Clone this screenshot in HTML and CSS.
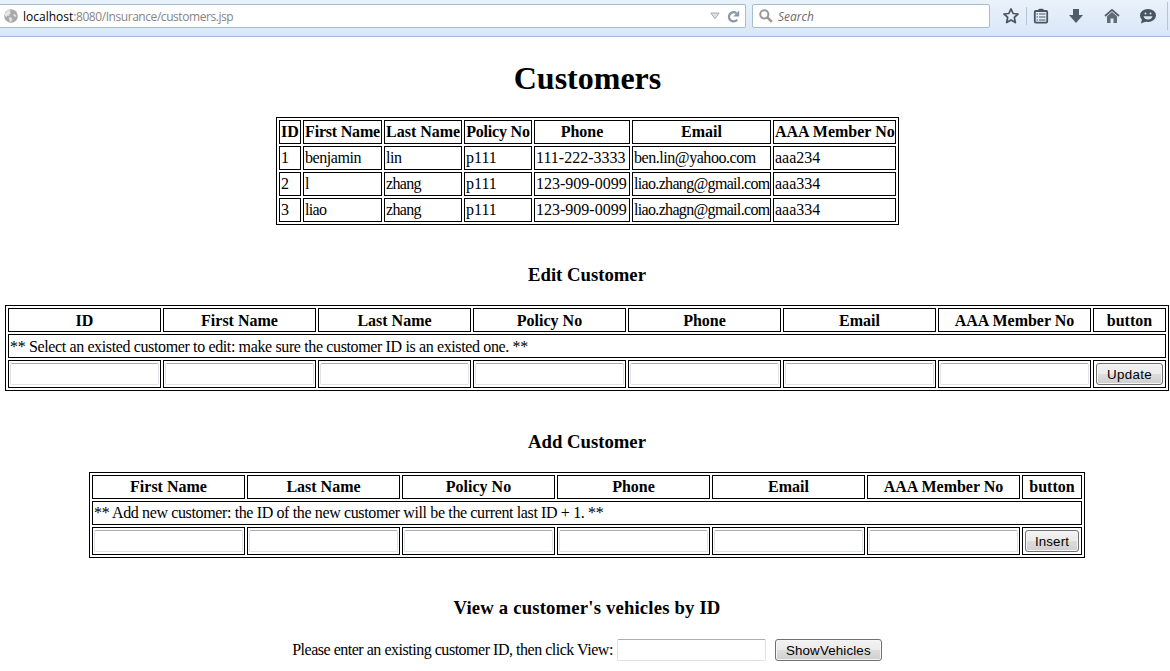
FILE: index.html
```html
<!DOCTYPE html>
<html lang="en">
<head>
<meta charset="utf-8">
<title>Customers</title>
<link rel="stylesheet" href="styles.css">
</head>
<body>
<header class="toolbar">
  <div class="field url">
    <svg class="globe" width="14" height="14" viewBox="0 0 14 14"><circle cx="7" cy="7" r="6.8" fill="#a9a9a9"/><path d="M1 4.5 3.5 1.6 6.5 1 6 3 7 4.2 5.2 5.2 5.4 7 3.6 6.6 2.6 8 1 7zM4.6 8 7.4 8.8 8.4 10.2 7 12.8 5.4 12.4 5.6 10.4zM9 6 10.5 5 12.5 7 11 8z" fill="#e6e6e6"/></svg>
    <span class="address"><b class="host">localhost</b>:8080/Insurance/customers.jsp</span>
    <svg class="drop" width="10" height="8" viewBox="0 0 10 8"><path d="M.8 1H9.2L5 6.8z" fill="#dde2e7" stroke="#a3adb7"/></svg>
    <svg class="reload" width="13" height="13" viewBox="0 0 13 13"><path d="M10.2 9.6A4.6 4.6 0 1 1 9.4 3.2" fill="none" stroke="#8b9aa8" stroke-width="2.3"/><path d="M12.2.4V6.4H6.2z" fill="#8b9aa8"/></svg>
  </div>
  <div class="field search">
    <svg width="14" height="14" viewBox="0 0 14 14"><circle cx="5.3" cy="5.3" r="4.1" fill="none" stroke="#979797" stroke-width="2"/><path d="M8.3 8.3 12.8 12.8" stroke="#979797" stroke-width="2.6"/></svg>
    <span class="hint">Search</span>
  </div>
  <nav class="icons">
    <svg class="star" width="18" height="18" viewBox="0 0 18 18"><path d="M9 1.9 11.1 6.5 16 7 12.3 10.4 13.4 15.6 9 13 4.6 15.6 5.7 10.4 2 7 6.9 6.5z" fill="none" stroke="#485462" stroke-width="1.7" stroke-linejoin="round"/></svg>
    <i class="rule"></i>
    <svg class="list" width="16" height="16" viewBox="0 0 16 16"><path d="M5 3V1.8L6.5.8H9.5L11 1.8V3z" fill="#485462"/><rect x="1.8" y="3" width="12.4" height="11.6" rx="1" fill="#e4eef8" stroke="#485462" stroke-width="1.8"/><path d="M3.5 6H5M6 6H12.5M3.5 9H5M6 9H12.5M3.5 12H5M6 12H12.5" stroke="#485462" stroke-width="1.2"/></svg>
    <svg class="down" width="16" height="16" viewBox="0 0 16 16"><path d="M5 1H11V7H15L8 15 1 7H5z" fill="#505c69"/></svg>
    <svg class="home" width="16" height="16" viewBox="0 0 16 16"><path d="M1 8 8 1.8 15 8" fill="none" stroke="#505c69" stroke-width="1.7"/><path d="M3 8.3 8 4 13 8.3V15H9.5V10.5H6.5V15H3z" fill="#606b77"/></svg>
    <svg class="chat" width="18" height="16" viewBox="0 0 18 16"><ellipse cx="9" cy="7.4" rx="8" ry="6.5" fill="#485462"/><path d="M3 11 2 15.5 8 13z" fill="#485462"/><path d="M4.5 8.3H13.5Q12.6 11.5 9 11.5T4.5 8.3z" fill="#dce7f2"/><circle cx="6.5" cy="5.4" r="1" fill="#dce7f2"/><circle cx="11.5" cy="5.4" r="1" fill="#dce7f2"/></svg>
    <i class="rule end"></i>
  </nav>
</header>
<main class="page">
  <h1>Customers</h1>
  <table class="grid customers">
    <colgroup><col class="c-id"><col class="c-first"><col class="c-last"><col class="c-policy"><col class="c-phone"><col class="c-email"><col class="c-aaa"></colgroup>
    <tr><th>ID</th><th class="snug">First Name</th><th>Last Name</th><th class="snug">Policy No</th><th>Phone</th><th>Email</th><th>AAA Member No</th></tr>
    <tr><td>1</td><td class="name">benjamin</td><td class="name">lin</td><td>p111</td><td>111-222-3333</td><td class="name">ben.lin@yahoo.com</td><td>aaa234</td></tr>
    <tr><td>2</td><td>l</td><td class="tight">zhang</td><td>p111</td><td>123-909-0099</td><td class="tight">liao.zhang@gmail.com</td><td>aaa334</td></tr>
    <tr><td>3</td><td class="tight">liao</td><td class="tight">zhang</td><td>p111</td><td>123-909-0099</td><td class="tight">liao.zhagn@gmail.com</td><td>aaa334</td></tr>
  </table>
  <h3 class="h-edit">Edit Customer</h3>
  <table class="grid edit">
    <colgroup><col span="7" class="c-input"><col class="c-update"></colgroup>
    <tr><th>ID</th><th>First Name</th><th>Last Name</th><th>Policy No</th><th>Phone</th><th>Email</th><th>AAA Member No</th><th>button</th></tr>
    <tr><td colspan="8" class="note">** Select an existed customer to edit: make sure the customer ID is an existed one. **</td></tr>
    <tr class="form"><td><input></td><td><input></td><td><input></td><td><input></td><td><input></td><td><input></td><td><input></td><td><button class="update">Update</button></td></tr>
  </table>
  <h3 class="h-add">Add Customer</h3>
  <table class="grid add">
    <colgroup><col span="6" class="c-input"><col class="c-insert"></colgroup>
    <tr><th>First Name</th><th>Last Name</th><th>Policy No</th><th>Phone</th><th>Email</th><th>AAA Member No</th><th>button</th></tr>
    <tr><td colspan="7" class="note">** Add new customer: the ID of the new customer will be the current last ID + 1. **</td></tr>
    <tr class="form"><td><input></td><td><input></td><td><input></td><td><input></td><td><input></td><td><input></td><td><button class="insert">Insert</button></td></tr>
  </table>
  <h3 class="h-view">View a customer's vehicles by ID</h3>
  <div class="view"><span class="prompt">Please enter an existing customer ID, then click View:</span><input><button class="show">ShowVehicles</button></div>
</main>
</body>
</html>
```
FILE: styles.css
```css
* { box-sizing: border-box; }
body { margin: 0; height: 671px; overflow: hidden; background: #fff; color: #000; font: 16px/20px "Liberation Serif", "Times New Roman", serif; }
.toolbar { display: flex; height: 37px; padding-top: 4px; background: linear-gradient(#e9f2fb, #d9e7f7); border-bottom: 1px solid #9fb9d6; font: 12px/22px "Open Sans", "Noto Sans", sans-serif; }
.field { display: flex; align-items: center; height: 24px; background: #fff; border: 1px solid #a6bcd4; border-radius: 2px; }
.url { width: 746px; border-left: 0; border-radius: 0 2px 2px 0; padding-left: 4px; color: #858585; }
.address { margin-left: 5px; padding-top: 2px; white-space: nowrap; letter-spacing: -0.44px; }
.host { font-weight: 400; letter-spacing: 0; color: #000; }
.drop { margin-left: auto; }
.reload { margin: 0 5px 0 7px; }
.search { width: 238px; margin-left: 6px; padding-left: 6px; }
.hint { margin-left: 5px; padding-top: 2px; font-style: italic; color: #6c6c6c; }
.icons { display: flex; align-items: center; height: 24px; margin-left: 12px; }
.icons svg { flex: none; }
.rule { flex: none; width: 1px; height: 18px; margin-left: 6px; background: #b4c5d8; }
.list { margin-left: 6px; }
.down { margin-left: 19px; }
.home { margin-left: 20px; }
.chat { margin-left: 19px; }
.rule.end { height: 28px; margin-left: 10px; }

.page { display: flex; flex-direction: column; align-items: center; padding-left: 4px; }
h1 { margin: 23px 0 0 1px; font-size: 32px; line-height: 37px; }
h3 { margin: 0; font-size: 18.72px; line-height: 22px; }
.grid { table-layout: fixed; border: 1px solid #000; border-collapse: separate; border-spacing: 2px; flex: none; }
.grid th, .grid td { height: 24px; padding: 1px; border: 1px solid #000; white-space: nowrap; line-height: 20px; }
.grid td { text-align: left; }
.customers { width: 623px; margin: 20px 0 0 1px; }
.customers .snug { letter-spacing: -0.2px; }
.customers .name { letter-spacing: -0.45px; }
.customers .tight { letter-spacing: -0.67px; }
.c-id { width: 22px; }
.c-first { width: 79px; }
.c-last { width: 78px; }
.c-policy { width: 68px; }
.c-phone { width: 96px; }
.c-email { width: 139px; }
.c-aaa { width: 123px; }
.c-input { width: 153px; }
.c-update { width: 73px; }
.c-insert { width: 60px; }
.edit { width: 1164px; margin-top: 19px; }
.edit th, .edit .note { padding: 2px 1px 0; }
.add { width: 996px; margin-top: 19px; }
.note { letter-spacing: -0.37px; }
.h-edit { margin-top: 39px; }
.h-add, .h-view { margin-top: 40px; }
.h-view { margin-top: 39px; letter-spacing: 0.17px; }
.grid .form td { height: 28px; }
input { display: block; width: 149px; height: 22px; margin: 0; padding: 1px; border: 1px solid #dfe2e8; border-top-color: #abadb3; border-radius: 2px; background: #fff; }
button { display: block; height: 22px; margin: 0 0 0 1px; padding: 1px 0 0; border: 1px solid #707070; border-radius: 3px; background: linear-gradient(#f2f2f2, #ebebeb 50%, #dddddd 50%, #cfcfcf); box-shadow: inset 0 0 0 1px #f6f6f6; color: #000; font: 13.33px/20px "Liberation Sans", Arial, sans-serif; letter-spacing: 0.15px; }
.update { width: 67px; letter-spacing: 0.3px; }
.insert { width: 54px; }
.view { display: flex; align-items: center; margin-top: 20px; height: 22px; }
.view input { margin-left: 4px; }
.view .show { width: 107px; margin-left: 9px; }
.prompt { letter-spacing: -0.48px; }
```
